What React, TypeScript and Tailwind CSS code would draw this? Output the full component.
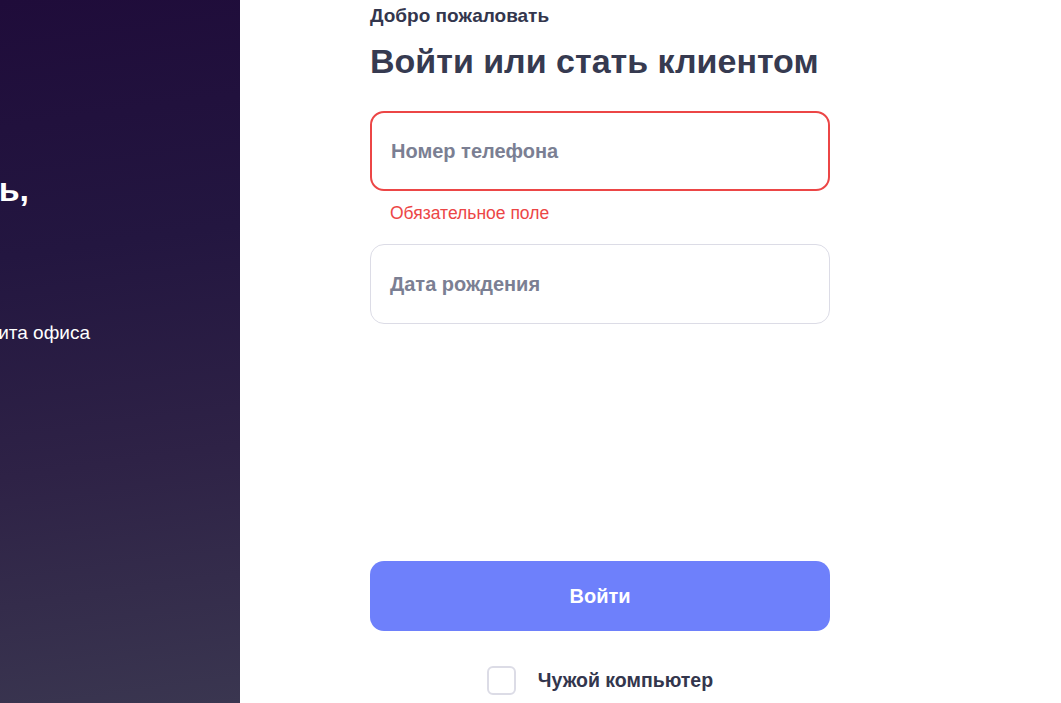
import { useState } from 'react';

const font = { fontFamily: '"Liberation Sans", Arial, sans-serif' };

function PromoPanel() {
  return (
    <aside className="relative h-full w-[240px] shrink-0 overflow-hidden bg-[linear-gradient(172deg,#1f0c3a_0%,#231640_35%,#2e2246_65%,#3a3650_100%)] text-white">
      <div className="-ml-[420px] flex w-[449px] flex-col items-end pt-[168px]">
        <h1 className="whitespace-nowrap text-[34px] font-bold leading-[42px]">Добро пожаловать,</h1>
      </div>
      <div className="-ml-[420px] flex w-[510px] flex-col items-end pt-[110px]">
        <p className="whitespace-nowrap text-[19px] leading-[26px]">Работайте без визита офиса</p>
      </div>
    </aside>
  );
}

function Field({ placeholder, error }: { placeholder: string; error?: string }) {
  return (
    <div className="flex flex-col">
      <div
        className={`flex h-[80px] items-center rounded-[14px] px-[19px] ${
          error ? 'border-2 border-[#ec4646]' : 'border border-[#dcdce6]'
        }`}
      >
        <span className="text-[20px] font-bold text-[#7b7f93]">{placeholder}</span>
      </div>
      {error && <p className="mt-[10px] pl-[20px] text-[17.5px] leading-[24px] text-[#ec4646]">{error}</p>}
    </div>
  );
}

export default function App() {
  const [foreign, setForeign] = useState(false);

  return (
    <div className="flex h-[703px] w-full overflow-hidden bg-white" style={font}>
      <PromoPanel />

      <main className="ml-[130px] flex w-[460px] flex-col">
        <p className="mt-[4px] text-[19px] font-bold leading-[24px] text-[#33364d]">Добро пожаловать</p>
        <h2 className="mt-[13px] text-[34px] font-bold leading-[40px] text-[#363a50]">Войти или стать клиентом</h2>

        <div className="mt-[30px] flex flex-col gap-[19px]">
          <Field placeholder="Номер телефона" error="Обязательное поле" />
          <Field placeholder="Дата рождения" />
        </div>

        <button className="mt-[237px] h-[70px] rounded-[14px] bg-[#6e80fb] text-[20px] font-bold text-white">
          Войти
        </button>

        <label className="mt-[35px] flex items-center justify-center gap-[22px]">
          <span
            onClick={() => setForeign(!foreign)}
            className={`h-[29px] w-[29px] rounded-[6px] border-2 border-[#dcdce6] ${foreign ? 'bg-[#6e80fb]' : 'bg-white'}`}
          />
          <span className="text-[19.5px] font-bold text-[#33364d]">Чужой компьютер</span>
        </label>
      </main>
    </div>
  );
}
